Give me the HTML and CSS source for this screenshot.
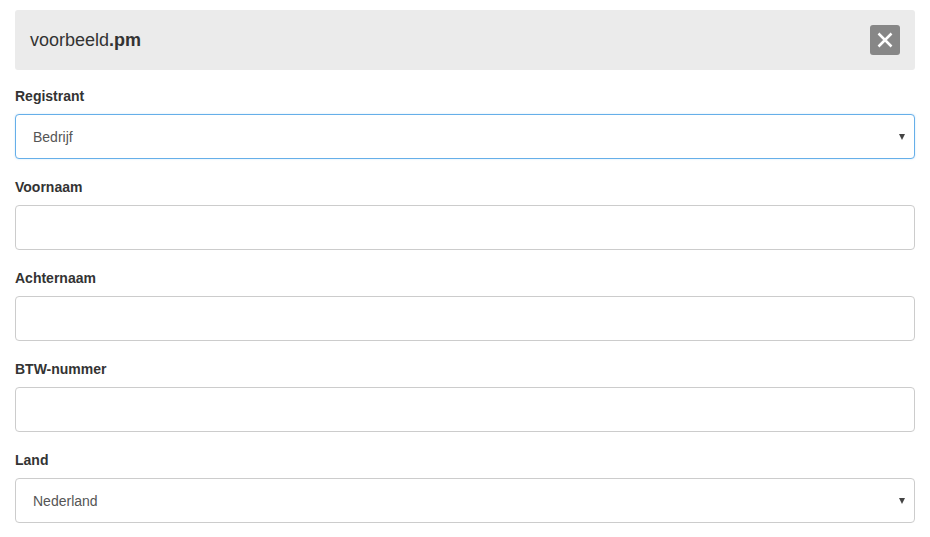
FILE: index.html
```html
<!DOCTYPE html>
<html lang="nl">
<head>
<meta charset="utf-8">
<title>voorbeeld.pm</title>
<link rel="stylesheet" href="styles.css">
</head>
<body>
<div class="page">
  <div class="header">
    <div class="domain">voorbeeld<b>.pm</b></div>
    <button class="close" type="button" aria-label="Sluiten">
      <svg width="16" height="16" viewBox="0 0 16 16"><path d="M1.5 1.5 L14.5 14.5 M14.5 1.5 L1.5 14.5" stroke="#fff" stroke-width="2.5" stroke-linecap="butt"/></svg>
    </button>
  </div>
  <form class="form">
    <div class="group">
      <label class="label">Registrant</label>
      <div class="select focus">
        <span class="value">Bedrijf</span>
        <span class="caret"></span>
      </div>
    </div>
    <div class="group">
      <label class="label">Voornaam</label>
      <input class="input" type="text">
    </div>
    <div class="group">
      <label class="label">Achternaam</label>
      <input class="input" type="text">
    </div>
    <div class="group">
      <label class="label">BTW-nummer</label>
      <input class="input" type="text">
    </div>
    <div class="group">
      <label class="label">Land</label>
      <div class="select">
        <span class="value">Nederland</span>
        <span class="caret"></span>
      </div>
    </div>
  </form>
</div>
</body>
</html>
```

FILE: styles.css
```css
* { box-sizing: border-box; }
html, body { margin: 0; padding: 0; background: #fff; }
body {
  font-family: "Liberation Sans", Arial, sans-serif;
  font-size: 14px;
  color: #333;
}
.page {
  padding: 10px 15px 0 15px;
  width: 930px;
}
.header {
  height: 60px;
  background: #ebebeb;
  border-radius: 3px;
  display: flex;
  align-items: center;
  justify-content: space-between;
  padding: 0 15px;
}
.domain {
  font-size: 18px;
  color: #333;
  line-height: 20px;
}
.domain b { font-weight: bold; }
.close {
  width: 30px;
  height: 30px;
  border: 0;
  border-radius: 3px;
  background: #878787;
  padding: 0;
  display: flex;
  align-items: center;
  justify-content: center;
}
.form {
  margin-top: 16px;
}
.group {
  margin-bottom: 18px;
}
.label {
  display: block;
  font-weight: bold;
  font-size: 14px;
  line-height: 20px;
  margin-bottom: 8px;
  color: #333;
}
.input, .select {
  display: block;
  width: 100%;
  height: 45px;
  border: 1px solid #cccccc;
  border-radius: 4px;
  background: #fff;
  font-family: inherit;
  font-size: 14px;
  color: #555;
  padding: 0 17px;
  margin: 0;
  outline: none;
}
.select {
  display: flex;
  align-items: center;
  justify-content: space-between;
  padding-right: 9px;
}
.select.focus {
  border-color: #66afe9;
  box-shadow: 0 0 2px rgba(102,175,233,0.35);
}
.caret {
  width: 0;
  height: 0;
  border-left: 3.5px solid transparent;
  border-right: 3.5px solid transparent;
  border-top: 6px solid #444;
}
```
